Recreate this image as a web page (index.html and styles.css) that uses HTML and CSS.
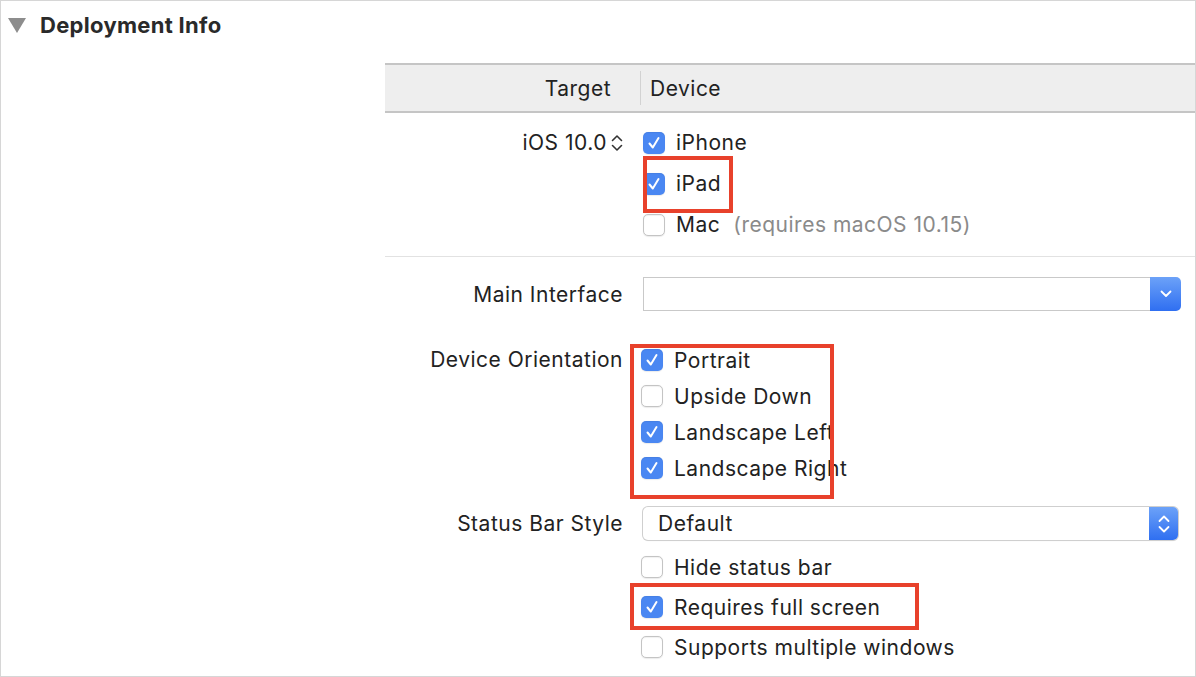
FILE: index.html
```html
<!DOCTYPE html>
<html lang="en">
<head>
<meta charset="utf-8">
<title>Deployment Info</title>
<link rel="stylesheet" href="styles.css">
</head>
<body>
<div class="panel">
  <div class="section-head">
    <svg class="disclosure" width="18" height="15" viewBox="0 0 18 15"><polygon points="0,0 18,0 9,15" fill="#8d8d8d"/></svg>
    <span class="section-title">Deployment Info</span>
  </div>

  <div class="content">
    <div class="table-head">
      <div class="th-target">Target</div>
      <div class="th-sep"></div>
      <div class="th-device">Device</div>
    </div>

    <div class="devices">
      <div class="target-cell">
        <span>iOS 10.0</span>
        <svg class="stepper" width="12" height="18" viewBox="0 0 12 18"><path d="M1.5 6.5 L6 2 L10.5 6.5 M1.5 11.5 L6 16 L10.5 11.5" fill="none" stroke="#333" stroke-width="1.6" stroke-linecap="round" stroke-linejoin="round"/></svg>
      </div>
      <div class="device-list">
        <div class="check-row dev"><span class="cb on"></span><span>iPhone</span></div>
        <div class="check-row dev"><span class="cb on"></span><span>iPad</span></div>
        <div class="check-row dev"><span class="cb"></span><span>Mac</span><span class="muted">(requires macOS 10.15)</span></div>
      </div>
    </div>

    <div class="field field-main">
      <div class="label">Main Interface</div>
      <div class="combo">
        <span class="combo-text"></span>
        <span class="combo-btn">
          <svg width="12" height="8" viewBox="0 0 12 8"><path d="M1.5 1.5 L6 6 L10.5 1.5" fill="none" stroke="#fff" stroke-width="1.8" stroke-linecap="round" stroke-linejoin="round"/></svg>
        </span>
      </div>
    </div>

    <div class="field field-orient">
      <div class="label orient-label">Device Orientation</div>
      <div class="checks">
        <div class="check-row orient"><span class="cb on"></span><span>Portrait</span></div>
        <div class="check-row orient"><span class="cb"></span><span>Upside Down</span></div>
        <div class="check-row orient"><span class="cb on"></span><span>Landscape Left</span></div>
        <div class="check-row orient"><span class="cb on"></span><span>Landscape Right</span></div>
      </div>
    </div>

    <div class="field field-status">
      <div class="label">Status Bar Style</div>
      <div class="popup">
        <span class="popup-text">Default</span>
        <span class="popup-btn">
          <svg width="12" height="20" viewBox="0 0 12 20"><path d="M1.5 7 L6 2.5 L10.5 7 M1.5 13 L6 17.5 L10.5 13" fill="none" stroke="#fff" stroke-width="1.8" stroke-linecap="round" stroke-linejoin="round"/></svg>
        </span>
      </div>
    </div>

    <div class="field field-status-opts">
      <div class="label"></div>
      <div class="checks">
        <div class="check-row opt"><span class="cb"></span><span>Hide status bar</span></div>
        <div class="check-row opt"><span class="cb on"></span><span>Requires full screen</span></div>
        <div class="check-row opt"><span class="cb"></span><span>Supports multiple windows</span></div>
      </div>
    </div>
  </div>

  <div class="mark mark-ipad"></div>
  <div class="mark mark-orient"></div>
  <div class="mark mark-full"></div>
</div>
</body>
</html>
```

FILE: styles.css
```css
* { box-sizing: border-box; }

html, body {
  margin: 0;
  padding: 0;
  background: #ffffff;
}

body {
  font-family: "Inter", "Liberation Sans", sans-serif;
  font-size: 21px;
  letter-spacing: 0.5px;
  color: #222222;
}

.panel {
  position: relative;
  width: 1196px;
  height: 677px;
  border: 1px solid #d6d6d6;
  overflow: hidden;
}

.section-head {
  height: 50px;
  display: flex;
  align-items: center;
  padding-left: 7px;
  padding-bottom: 2px;
}

.disclosure {
  display: block;
  margin-right: 14px;
}

.section-title {
  font-weight: 700;
  font-size: 22px;
  color: #2a2a2a;
  letter-spacing: 0.3px;
}

.content {
  margin-left: 384px;
  margin-top: 12px;
}

.table-head {
  height: 50px;
  background: #eeeeee;
  border-top: 2px solid #c5c5c5;
  border-bottom: 2px solid #c5c5c5;
  display: flex;
  align-items: center;
}

.th-target {
  width: 226px;
  text-align: right;
}

.th-sep {
  width: 1px;
  height: 34px;
  background: #d2d2d2;
  margin-left: 29px;
  margin-right: 9px;
}

.devices {
  display: flex;
  padding-top: 9px;
  padding-bottom: 11px;
  border-bottom: 1px solid #e2e2e2;
}

.target-cell {
  width: 240px;
  height: 41px;
  display: flex;
  align-items: center;
  justify-content: flex-end;
  gap: 4px;
  padding-right: 2px;
}

.stepper { display: block; }

.device-list {
  margin-left: 18px;
  display: flex;
  flex-direction: column;
}

.check-row {
  display: flex;
  align-items: center;
  gap: 11px;
}

.check-row.dev { height: 41px; }
.check-row.orient { height: 36px; }
.check-row.opt { height: 40px; }

.muted {
  color: #8a8a8a;
  margin-left: 2px;
}

.cb {
  display: block;
  flex: none;
  width: 22px;
  height: 22px;
  border-radius: 5px;
  background: #ffffff;
  border: 1px solid #c4c4c4;
  box-shadow: inset 0 1px 1px rgba(0,0,0,0.06), 0 0.5px 1px rgba(0,0,0,0.08);
}

.cb.on {
  border: none;
  background-color: #4a87f2;
  background-image: url("data:image/svg+xml,%3Csvg xmlns='http://www.w3.org/2000/svg' width='22' height='22' viewBox='0 0 22 22'%3E%3Cpath d='M6.5 11.5 L9.8 15.5 L15.5 6' fill='none' stroke='white' stroke-width='2' stroke-linecap='round' stroke-linejoin='round'/%3E%3C/svg%3E");
}

.field {
  display: flex;
}

.label {
  width: 240px;
  flex: none;
  text-align: right;
  padding-right: 2px;
}

.field-main {
  margin-top: 20px;
  align-items: center;
}

.combo {
  margin-left: 18px;
  width: 538px;
  height: 34px;
  display: flex;
}

.combo-text {
  flex: 1;
  border: 1px solid #c9c9c9;
  border-right: none;
  background: #fff;
}

.combo-btn {
  width: 31px;
  display: flex;
  align-items: center;
  justify-content: center;
  border-radius: 0 5px 5px 0;
  background: linear-gradient(#6ca2f8, #2f6ff1);
}

.field-orient {
  margin-top: 31px;
}

.orient-label {
  line-height: 36px;
  height: 36px;
}

.checks {
  margin-left: 16px;
  display: flex;
  flex-direction: column;
}

.field-status {
  margin-top: 21px;
  align-items: center;
}

.popup {
  margin-left: 18px;
  width: 535px;
  height: 33px;
  display: flex;
  border-radius: 5px;
  background: #fff;
  box-shadow: 0 0 0 1px #cfcfcf, 0 1px 1px rgba(0,0,0,0.12);
  overflow: hidden;
}

.popup-text {
  flex: 1;
  padding-left: 15px;
  line-height: 33px;
}

.popup-btn {
  width: 29px;
  display: flex;
  align-items: center;
  justify-content: center;
  background: linear-gradient(#6ca2f8, #2f6ff1);
}

.field-status-opts {
  margin-top: 7px;
}

.mark {
  position: absolute;
  border: 4px solid #e8412b;
}

.mark-ipad {
  left: 642px;
  top: 155px;
  width: 90px;
  height: 57px;
}

.mark-orient {
  left: 629px;
  top: 343px;
  width: 204px;
  height: 155px;
}

.mark-full {
  left: 629px;
  top: 582px;
  width: 289px;
  height: 47px;
}
```
